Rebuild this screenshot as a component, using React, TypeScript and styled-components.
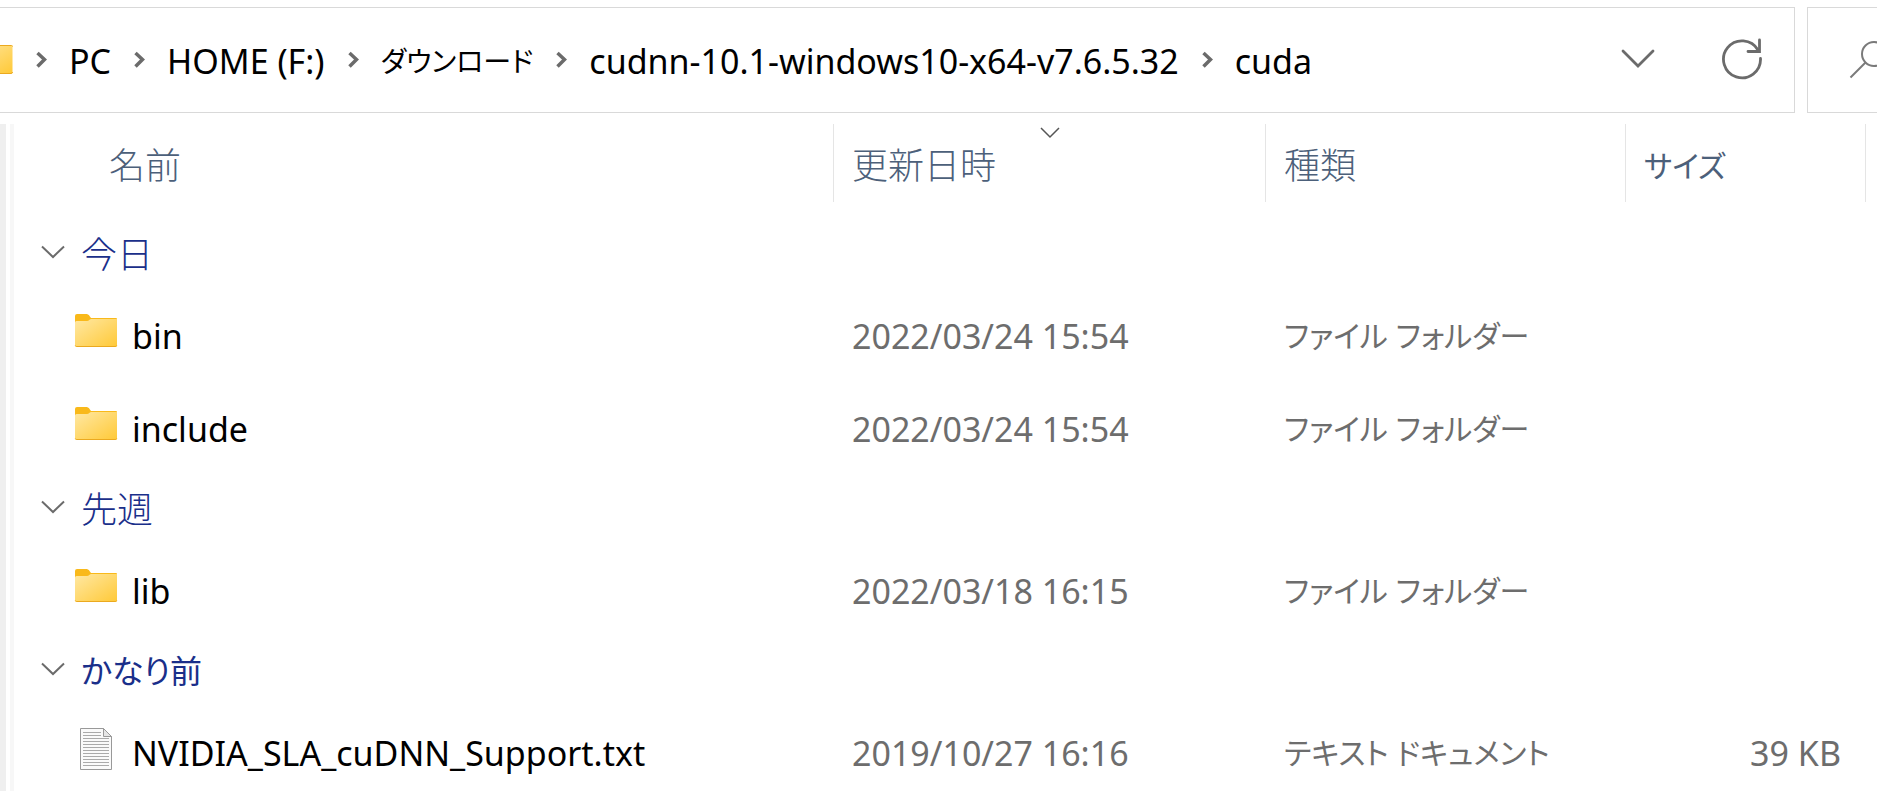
import React, { useState } from "react";
import styled, { createGlobalStyle } from "styled-components";

const GlobalStyle = createGlobalStyle`
  *, *::before, *::after { box-sizing: border-box; }
  html, body { margin: 0; background: #fff; overflow: hidden; }
  body {
    font-family: "Noto Sans", "Noto Sans CJK JP", sans-serif;
    font-size: 34px;
    line-height: 48px;
    color: #000;
  }
  button, a, input { font: inherit; color: inherit; }
`;

const Window = styled.div`
  min-height: 100vh;
  display: flex;
  flex-direction: column;
  background: #fff;
`;

const TopBar = styled.header`
  display: flex;
  gap: 12px;
  padding-top: 7px;
  height: 124px;
  padding-bottom: 11px;
`;

const AddressBar = styled.div`
  flex: 1;
  min-width: 0;
  display: flex;
  align-items: center;
  border: 1px solid #d9d9d9;
  border-left: 0;
`;

const Crumbs = styled.nav`
  flex: 1;
  min-width: 0;
  display: flex;
  align-items: center;
  gap: 22px;
`;

const Crumb = styled.a<{ $kana?: boolean }>`
  padding-top: 2px;
  color: #000;
  text-decoration: none;
  white-space: nowrap;
  font-size: ${(p) => (p.$kana ? "28px" : "34px")};
  font-feature-settings: ${(p) => (p.$kana ? '"palt"' : "normal")};
`;

const IconButton = styled.button`
  display: flex;
  align-items: center;
  justify-content: center;
  border: 0;
  padding: 0;
  background: none;
  width: 104px;
  height: 100%;
  padding-bottom: 2px;
`;

const SearchBox = styled.form`
  width: 70px;
  display: flex;
  align-items: center;
  justify-content: flex-end;
  border: 1px solid #d9d9d9;
  border-right: 0;
`;

const SearchButton = styled.button`
  display: flex;
  border: 0;
  padding: 0;
  background: none;
`;

const Body = styled.div`
  flex: 1;
  display: flex;
`;

const Splitter = styled.div`
  flex: none;
  width: 14px;
  border-left: 6px solid #efefef;
  border-right: 4px solid #f7f7f7;
`;

const Main = styled.main`
  flex: 1;
  min-width: 0;
  padding-right: 11px;
`;

const FileTable = styled.table`
  width: 100%;
  table-layout: fixed;
  border-collapse: separate;
  border-spacing: 0;
`;

const HeadCell = styled.th<{ $width?: number; $first?: boolean }>`
  position: relative;
  width: ${(p) => (p.$width ? `${p.$width}px` : "auto")};
  height: 78px;
  padding: 2px 0 0 ${(p) => (p.$first ? 95 : 18)}px;
  border-right: 1px solid #e5e5e5;
  text-align: left;
  font-weight: 300;
  color: #4c607a;
`;

const HeadButton = styled.button<{ $kana?: boolean }>`
  border: 0;
  padding: 0;
  background: none;
  font-family: "Noto Sans CJK JP", sans-serif;
  font-size: ${(p) => (p.$kana ? "30px" : "36px")};
  font-weight: ${(p) => (p.$kana ? 400 : 300)};
  font-feature-settings: ${(p) => (p.$kana ? '"palt"' : "normal")};
`;

const SortMark = styled.svg`
  position: absolute;
  top: 3px;
  left: calc(50% - 10px);
`;

const GroupCell = styled.th`
  height: 69px;
  padding: 0 0 0 27px;
  text-align: left;
  font-weight: 300;
  color: #1a2f8a;
`;

const GroupButton = styled.button<{ $kana?: boolean }>`
  display: flex;
  align-items: center;
  gap: 16px;
  border: 0;
  padding: 0;
  background: none;
  font-family: "Noto Sans CJK JP", sans-serif;
  font-size: ${(p) => (p.$kana ? "32px" : "36px")};
  font-weight: ${(p) => (p.$kana ? 400 : 300)};
  font-feature-settings: "palt";
`;

const Cell = styled.td<{ $kana?: boolean; $right?: boolean }>`
  height: 93px;
  padding: ${(p) => (p.$right ? "6px 25px 0 0" : "6px 0 0 18px")};
  text-align: ${(p) => (p.$right ? "right" : "left")};
  white-space: nowrap;
  color: #6d6d6d;
  font-size: ${(p) => (p.$kana ? "30px" : "34px")};
  font-feature-settings: ${(p) => (p.$kana ? '"palt"' : "normal")};
`;

const NameCell = styled.td`
  height: 93px;
  padding: 0 0 0 58px;
`;

const FileLink = styled.a`
  display: flex;
  align-items: center;
  gap: 12px;
  color: #000;
  text-decoration: none;
  white-space: nowrap;
`;

const FileName = styled.span`
  padding-top: 6px;
`;

const Spacer = styled.td`
  height: 15px;
  padding: 0;
`;

const SpacerRow = () => (
  <tr aria-hidden="true">
    <Spacer colSpan={4} />
  </tr>
);

const CrumbArrow = () => (
  <svg width="12" height="18" viewBox="0 0 12 18" fill="none" aria-hidden="true">
    <path d="M2.500 2 9.500 8.500 2.500 15.500" stroke="#6b6b6b" strokeWidth="3.500" />
  </svg>
);

const GroupArrow = () => (
  <svg width="24" height="14" viewBox="0 0 24 14" fill="none" aria-hidden="true">
    <path d="M1 1.500 12 12 23 1.500" stroke="#6b6b6b" strokeWidth="2" />
  </svg>
);

const FolderShape = () => (
  <>
    <defs>
      <linearGradient id="folder" x1="0" y1="0" x2="1" y2="1">
        <stop offset="0" stopColor="#ffe8a3" />
        <stop offset="1" stopColor="#ffc937" />
      </linearGradient>
    </defs>
    <path d="M3 14V7a2 2 0 0 1 2-2h9.500c1.500 0 2.500 1 3.200 2.200l1.300 1.800H44a1 1 0 0 1 1 1v4z" fill="#f9b91a" />
    <path d="M3 13.500a1.500 1.500 0 0 1 1.500-1.500H15c2 0 2.500-2 4.500-2H45v26.500a1.500 1.500 0 0 1-1.500 1.500h-39A1.500 1.500 0 0 1 3 36.500z" fill="url(#folder)" />
    <path d="M3.300 36.500q.4 1 1.400 1h38.600q1 0 1.400-1" fill="none" stroke="#eba91f" />
  </>
);

const FolderIcon = () => (
  <svg width="48" height="48" viewBox="0 0 48 48" aria-hidden="true">
    <FolderShape />
  </svg>
);

const CrumbFolder = () => (
  <svg width="13" height="48" viewBox="32 0 13 48" aria-hidden="true">
    <path d="M0 9.500h43.500a1 1 0 0 1 1 1V36a1.500 1.500 0 0 1-1.500 1.500H0z" fill="url(#folder)" />
    <path d="M0 9.500h43.500a1 1 0 0 1 1 1M0 37.500h43a1.500 1.500 0 0 0 1.500-1.500" fill="none" stroke="#eba91f" />
  </svg>
);

const TextFileIcon = () => (
  <svg width="48" height="48" viewBox="0 0 48 48" aria-hidden="true">
    <path d="M8.500 2.500h23l8 8v33h-31z" fill="#fafafa" stroke="#999" />
    <path d="M31.500 2.500v8h8z" fill="#e6e6e6" stroke="#999" />
    <path
      d="M11 6.500h18M11 9.500h18M11 12.500h26M11 15.500h26M11 18.500h26M11 21.500h26M11 24.500h26M11 27.500h26M11 30.500h26M11 33.500h26M11 36.500h26M11 39.500h26"
      stroke="#aaa"
    />
  </svg>
);

type Entry = { name: string; date: string; type: string; size?: string };
type Group = { label: string; kana?: boolean; items: Entry[] };

const crumbs = ["PC", "HOME (F:)", "ダウンロード", "cudnn-10.1-windows10-x64-v7.6.5.32", "cuda"];

const groups: Group[] = [
  {
    label: "今日",
    items: [
      { name: "bin", date: "2022/03/24 15:54", type: "ファイル フォルダー" },
      { name: "include", date: "2022/03/24 15:54", type: "ファイル フォルダー" },
    ],
  },
  { label: "先週", items: [{ name: "lib", date: "2022/03/18 16:15", type: "ファイル フォルダー" }] },
  {
    label: "かなり前",
    kana: true,
    items: [
      { name: "NVIDIA_SLA_cuDNN_Support.txt", date: "2019/10/27 16:16", type: "テキスト ドキュメント", size: "39 KB" },
    ],
  },
];

export default function App() {
  const [closed, setClosed] = useState<string[]>([]);
  const toggle = (label: string) =>
    setClosed((c) => (c.includes(label) ? c.filter((l) => l !== label) : [...c, label]));

  return (
    <Window>
      <GlobalStyle />
      <TopBar>
        <AddressBar>
          <Crumbs aria-label="パス">
            <CrumbFolder />
            {crumbs.map((c) => (
              <React.Fragment key={c}>
                <CrumbArrow />
                <Crumb href="#" $kana={c === "ダウンロード"}>
                  {c}
                </Crumb>
              </React.Fragment>
            ))}
          </Crumbs>
          <IconButton type="button" aria-label="以前の場所">
            <svg width="34" height="20" viewBox="0 0 34 20" fill="none">
              <path d="M2 2 17 17 32 2" stroke="#6b6b6b" strokeWidth="2.800" strokeLinecap="round" />
            </svg>
          </IconButton>
          <IconButton type="button" aria-label="更新">
            <svg width="42" height="42" viewBox="0 0 42 42" fill="none" strokeLinecap="round">
              <path d="M39.500 20.500A18.500 18.500 0 1 1 37 12" stroke="#6b6b6b" strokeWidth="2.800" />
              <path d="M38.500 2v11.500H27" stroke="#6b6b6b" strokeWidth="2.800" />
            </svg>
          </IconButton>
        </AddressBar>
        <SearchBox role="search">
          <SearchButton type="button" aria-label="検索">
            <svg width="28" height="38" viewBox="0 0 28 38" fill="none">
              <circle cx="25" cy="13" r="12" stroke="#7a7a7a" strokeWidth="2" />
              <path d="M16.500 21.500 1.500 36.500" stroke="#7a7a7a" strokeWidth="2" />
            </svg>
          </SearchButton>
        </SearchBox>
      </TopBar>
      <Body>
        <Splitter />
        <Main>
          <FileTable>
            <thead>
              <tr>
                <HeadCell scope="col" $first>
                  <HeadButton type="button">名前</HeadButton>
                </HeadCell>
                <HeadCell scope="col" $width={432} aria-sort="descending">
                  <SortMark width="20" height="12" viewBox="0 0 20 12" fill="none" aria-hidden="true">
                    <path d="M1 1 10 10 19 1" stroke="#555" strokeWidth="1.500" />
                  </SortMark>
                  <HeadButton type="button">更新日時</HeadButton>
                </HeadCell>
                <HeadCell scope="col" $width={360}>
                  <HeadButton type="button">種類</HeadButton>
                </HeadCell>
                <HeadCell scope="col" $width={240}>
                  <HeadButton type="button" $kana>
                    サイズ
                  </HeadButton>
                </HeadCell>
              </tr>
            </thead>
            {groups.map((g, i) => (
              <tbody key={g.label}>
                {i === 0 && <SpacerRow />}
                <tr>
                  <GroupCell scope="rowgroup" colSpan={4}>
                    <GroupButton
                      type="button"
                      $kana={g.kana}
                      aria-expanded={!closed.includes(g.label)}
                      onClick={() => toggle(g.label)}
                    >
                      <GroupArrow />
                      {g.label}
                    </GroupButton>
                  </GroupCell>
                </tr>
                {!closed.includes(g.label) &&
                  g.items.map((f) => (
                    <tr key={f.name}>
                      <NameCell>
                        <FileLink href="#">
                          {f.size ? <TextFileIcon /> : <FolderIcon />}
                          <FileName>{f.name}</FileName>
                        </FileLink>
                      </NameCell>
                      <Cell>{f.date}</Cell>
                      <Cell $kana>{f.type}</Cell>
                      <Cell $right>{f.size}</Cell>
                    </tr>
                  ))}
              </tbody>
            ))}
          </FileTable>
        </Main>
      </Body>
    </Window>
  );
}
